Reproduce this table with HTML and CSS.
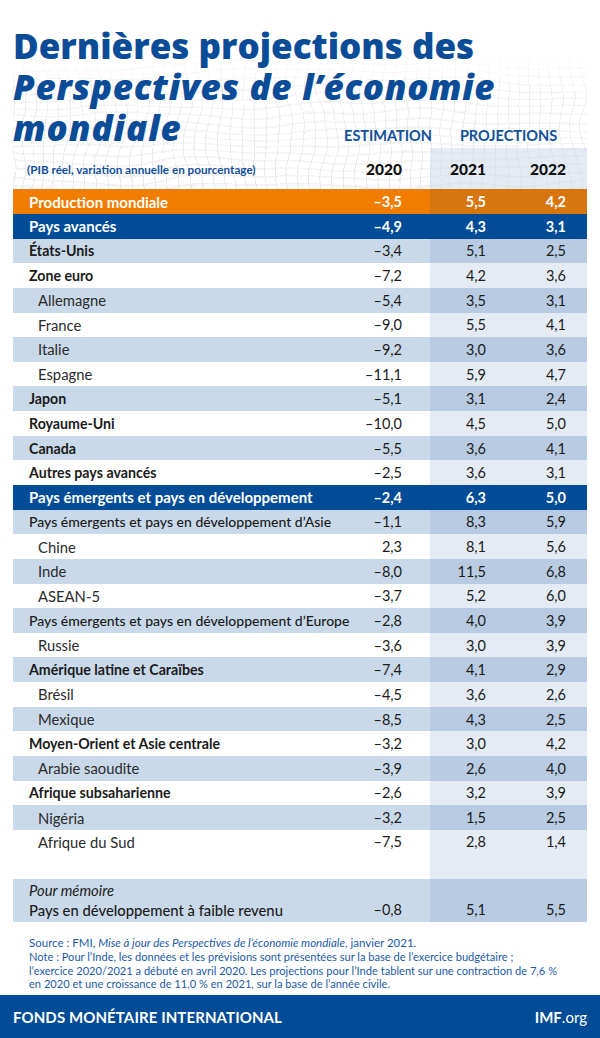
FILE: index.html
```html
<!DOCTYPE html>
<html lang="fr">
<head>
<meta charset="utf-8">
<title>Dernières projections des Perspectives de l'économie mondiale</title>
<link rel="stylesheet" href="styles.css">
</head>
<body>
<div class="sheet">
  <header class="head">
    <svg class="mesh" viewBox="0 0 574 140" preserveAspectRatio="none" aria-hidden="true">
      <defs>
        <pattern id="grid" width="11" height="8" patternUnits="userSpaceOnUse">
          <path d="M0 0.5H11M0.5 0V8" fill="none" stroke="#c4c4c4" stroke-width="0.6"/>
        </pattern>
        <filter id="warp" x="-10%" y="-10%" width="120%" height="120%">
          <feTurbulence type="fractalNoise" baseFrequency="0.006 0.015" numOctaves="2" seed="7"/>
          <feDisplacementMap in="SourceGraphic" scale="30" xChannelSelector="R" yChannelSelector="G"/>
        </filter>
        <linearGradient id="fade" x1="0" y1="0" x2="0" y2="1">
          <stop offset="0" stop-color="#fff" stop-opacity="0"/>
          <stop offset="0.3" stop-color="#fff" stop-opacity="0.7"/>
          <stop offset="1" stop-color="#fff" stop-opacity="1"/>
        </linearGradient>
        <mask id="m">
          <rect x="0" y="0" width="574" height="140" fill="url(#fade)"/>
        </mask>
      </defs>
      <g mask="url(#m)" opacity="0.6">
        <rect x="-25" y="-15" width="624" height="170" fill="url(#grid)" filter="url(#warp)"/>
      </g>
    </svg>
    <h1 class="title">
      <span class="t-line t1">Dernières projections des</span>
      <span class="t-line t2"><em>Perspectives de l’économie</em></span>
      <span class="t-line t3"><em>mondiale</em></span>
    </h1>
    <div class="grp grp-est">ESTIMATION</div>
    <div class="grp grp-proj">PROJECTIONS</div>
    <div class="unit">(PIB réel, variation annuelle en pourcentage)</div>
    <div class="yr yr20">2020</div>
    <div class="yr yr21 proj">2021</div>
    <div class="yr yr22 proj">2022</div>
  </header>

  <section class="table">
    <div class="row r-orange"><div class="lbl b">Production mondiale</div><div class="c c20">–3,5</div><div class="c c21">5,5</div><div class="c c22">4,2</div></div>
    <div class="row r-blue"><div class="lbl b">Pays avancés</div><div class="c c20">–4,9</div><div class="c c21">4,3</div><div class="c c22">3,1</div></div>
    <div class="row r-light"><div class="lbl b">États-Unis</div><div class="c c20">–3,4</div><div class="c c21">5,1</div><div class="c c22">2,5</div></div>
    <div class="row r-white"><div class="lbl b">Zone euro</div><div class="c c20">–7,2</div><div class="c c21">4,2</div><div class="c c22">3,6</div></div>
    <div class="row r-light"><div class="lbl ind">Allemagne</div><div class="c c20">–5,4</div><div class="c c21">3,5</div><div class="c c22">3,1</div></div>
    <div class="row r-white"><div class="lbl ind">France</div><div class="c c20">–9,0</div><div class="c c21">5,5</div><div class="c c22">4,1</div></div>
    <div class="row r-light"><div class="lbl ind">Italie</div><div class="c c20">–9,2</div><div class="c c21">3,0</div><div class="c c22">3,6</div></div>
    <div class="row r-white"><div class="lbl ind">Espagne</div><div class="c c20">–11,1</div><div class="c c21">5,9</div><div class="c c22">4,7</div></div>
    <div class="row r-light"><div class="lbl b">Japon</div><div class="c c20">–5,1</div><div class="c c21">3,1</div><div class="c c22">2,4</div></div>
    <div class="row r-white"><div class="lbl b">Royaume-Uni</div><div class="c c20">–10,0</div><div class="c c21">4,5</div><div class="c c22">5,0</div></div>
    <div class="row r-light"><div class="lbl b">Canada</div><div class="c c20">–5,5</div><div class="c c21">3,6</div><div class="c c22">4,1</div></div>
    <div class="row r-white"><div class="lbl b">Autres pays avancés</div><div class="c c20">–2,5</div><div class="c c21">3,6</div><div class="c c22">3,1</div></div>
    <div class="row r-blue"><div class="lbl b">Pays émergents et pays en développement</div><div class="c c20">–2,4</div><div class="c c21">6,3</div><div class="c c22">5,0</div></div>
    <div class="row r-light"><div class="lbl m">Pays émergents et pays en développement d’Asie</div><div class="c c20">–1,1</div><div class="c c21">8,3</div><div class="c c22">5,9</div></div>
    <div class="row r-white"><div class="lbl ind">Chine</div><div class="c c20">2,3</div><div class="c c21">8,1</div><div class="c c22">5,6</div></div>
    <div class="row r-light"><div class="lbl ind">Inde</div><div class="c c20">–8,0</div><div class="c c21">11,5</div><div class="c c22">6,8</div></div>
    <div class="row r-white"><div class="lbl ind">ASEAN-5</div><div class="c c20">–3,7</div><div class="c c21">5,2</div><div class="c c22">6,0</div></div>
    <div class="row r-light"><div class="lbl m">Pays émergents et pays en développement d’Europe</div><div class="c c20">–2,8</div><div class="c c21">4,0</div><div class="c c22">3,9</div></div>
    <div class="row r-white"><div class="lbl ind">Russie</div><div class="c c20">–3,6</div><div class="c c21">3,0</div><div class="c c22">3,9</div></div>
    <div class="row r-light"><div class="lbl b">Amérique latine et Caraïbes</div><div class="c c20">–7,4</div><div class="c c21">4,1</div><div class="c c22">2,9</div></div>
    <div class="row r-white"><div class="lbl ind">Brésil</div><div class="c c20">–4,5</div><div class="c c21">3,6</div><div class="c c22">2,6</div></div>
    <div class="row r-light"><div class="lbl ind">Mexique</div><div class="c c20">–8,5</div><div class="c c21">4,3</div><div class="c c22">2,5</div></div>
    <div class="row r-white"><div class="lbl b">Moyen-Orient et Asie centrale</div><div class="c c20">–3,2</div><div class="c c21">3,0</div><div class="c c22">4,2</div></div>
    <div class="row r-light"><div class="lbl ind">Arabie saoudite</div><div class="c c20">–3,9</div><div class="c c21">2,6</div><div class="c c22">4,0</div></div>
    <div class="row r-white"><div class="lbl b">Afrique subsaharienne</div><div class="c c20">–2,6</div><div class="c c21">3,2</div><div class="c c22">3,9</div></div>
    <div class="row r-light"><div class="lbl ind">Nigéria</div><div class="c c20">–3,2</div><div class="c c21">1,5</div><div class="c c22">2,5</div></div>
    <div class="row r-white r-tall"><div class="lbl ind">Afrique du Sud</div><div class="c c20">–7,5</div><div class="c c21">2,8</div><div class="c c22">1,4</div></div>
    <div class="row r-light r-memo">
      <div class="lbl memo"><em>Pour mémoire</em><span>Pays en développement à faible revenu</span></div>
      <div class="c c20">–0,8</div><div class="c c21">5,1</div><div class="c c22">5,5</div>
    </div>
  </section>

  <section class="notes">
    <p class="src">Source : FMI, <em>Mise à jour des Perspectives de l’économie mondiale</em>, janvier 2021.</p>
    <p class="note">Note : Pour l’Inde, les données et les prévisions sont présentées sur la base de l’exercice budgétaire ;<br>l’exercice 2020/2021 a débuté en avril 2020. Les projections pour l’Inde tablent sur une contraction de 7,6 %<br>en 2020 et une croissance de 11,0 % en 2021, sur la base de l’année civile.</p>
  </section>
</div>
<footer class="bar">
  <span class="org">FONDS MONÉTAIRE INTERNATIONAL</span>
  <span class="site"><b>IMF</b>.org</span>
</footer>
</body>
</html>
```

FILE: styles.css
```css
* { box-sizing: border-box; }

html, body {
  margin: 0;
  padding: 0;
  background: #fff;
}

body {
  position: relative;
  width: 600px;
  height: 1038px;
  overflow: hidden;
  font-family: Lato, "Open Sans", "Liberation Sans", sans-serif;
  color: #1b1b1b;
}

.sheet {
  padding: 0 13px;
}

/* ---------- header ---------- */
.head {
  position: relative;
  display: grid;
  grid-template-columns: 317px 100px 78px 79px;
  grid-template-rows: 41px 41px 41px 41.3px;
  padding-top: 25px;
}

.mesh {
  position: absolute;
  left: 0;
  top: 50px;
  width: 574px;
  height: 139.3px;
  z-index: 0;
}

.title {
  display: contents;
}

.t-line {
  position: relative;
  z-index: 1;
  font-family: "Open Sans", Lato, sans-serif;
  font-size: 35px;
  line-height: 41px;
  font-weight: 800;
  color: #0b4c98;
  white-space: nowrap;
}

.t-line em {
  font-style: italic;
  letter-spacing: 0.7px;
}

.t1 { grid-row: 1; grid-column: 1 / -1; letter-spacing: 0; }
.t2 { grid-row: 2; grid-column: 1 / -1; }
.t3 { grid-row: 3; grid-column: 1; align-self: baseline; }
.t3 em { letter-spacing: 1px; }

.grp {
  position: relative;
  z-index: 1;
  grid-row: 3;
  align-self: baseline;
  font-size: 14.5px;
  font-weight: 700;
  color: #11509c;
  white-space: nowrap;
}

.grp-est {
  grid-column: 2;
  justify-self: end;
  margin-right: -2px;
}

.grp-proj {
  grid-column: 3 / 5;
  justify-self: center;
}

.unit, .yr {
  position: relative;
  z-index: 1;
  grid-row: 4;
  display: flex;
  align-items: center;
}

.unit {
  grid-column: 1;
  padding-left: 14px;
  font-size: 11.7px;
  font-weight: 700;
  color: #11509c;
  white-space: nowrap;
}

.yr {
  justify-content: flex-end;
  font-size: 15.5px;
  font-weight: 900;
  color: #111;
}

.yr20 { grid-column: 2; padding-right: 28px; }
.yr21 { grid-column: 3; padding-right: 22px; }
.yr22 { grid-column: 4; padding-right: 21px; }

.proj {
  background: rgba(205, 218, 236, 0.55);
}

/* ---------- table ---------- */
.row {
  display: grid;
  grid-template-columns: 317px 100px 78px 79px;
  height: 24.65px;
  font-size: 14px;
}

.lbl, .c {
  display: flex;
  align-items: center;
  white-space: nowrap;
}

.lbl {
  padding-left: 16px;
  color: #1b1b1b;
  font-size: 14.8px;
}

.lbl.b { font-weight: 700; font-size: 14.2px; }
.lbl.m { font-weight: 500; font-size: 14px; }
.lbl.ind { padding-left: 25px; color: #2b2b2b; }

.c {
  justify-content: flex-end;
  color: #1b1b1b;
  font-size: 14.5px;
}

.c20 { padding-right: 28px; }
.c21 { padding-right: 22px; }
.c22 { padding-right: 21px; }

.r-white { background: #fff; }
.r-white .c21, .r-white .c22 { background: #e4ebf4; }

.r-light { background: #c9d9e9; }
.r-light .c21, .r-light .c22 { background: #b8cbe2; }

.r-orange { background: #f07d00; }
.r-orange .c21, .r-orange .c22 { background: #d7750f; }

.r-blue { background: #004c97; }

.r-orange .lbl, .r-orange .c,
.r-blue .lbl, .r-blue .c {
  color: #fff;
  font-weight: 700;
}

.r-orange .lbl, .r-blue .lbl {
  font-size: 15px;
}

.r-tall {
  height: 49.5px;
}

.r-tall .lbl, .r-tall .c {
  align-items: flex-start;
  line-height: 24.65px;
}

.r-memo {
  height: 42.4px;
}

.memo {
  flex-direction: column;
  align-items: flex-start;
  justify-content: flex-start;
  padding-top: 1px;
  line-height: 20px;
}

.memo em { font-style: italic; font-weight: 400; }
.memo span { font-weight: 500; }

.r-memo .c {
  align-items: flex-end;
  line-height: 20px;
  padding-bottom: 1.5px;
}

/* ---------- notes ---------- */
.notes {
  padding: 14px 16px 0 16px;
  line-height: 13.4px;
  color: #1c5aa7;
  white-space: nowrap;
}

.notes p {
  margin: 0 0 1px 0;
}

.src { font-size: 11.5px; }
.note { font-size: 11.1px; }

/* ---------- footer bar ---------- */
.bar {
  position: absolute;
  left: 0;
  right: 0;
  bottom: 0;
  height: 43px;
  display: flex;
  align-items: center;
  justify-content: space-between;
  padding: 0 13px;
  background: #004c97;
  color: #fff;
}

.org {
  font-size: 15px;
  font-weight: 700;
  letter-spacing: 0.1px;
}

.site {
  font-size: 15px;
  font-weight: 400;
}

.site b { font-weight: 700; }
```
